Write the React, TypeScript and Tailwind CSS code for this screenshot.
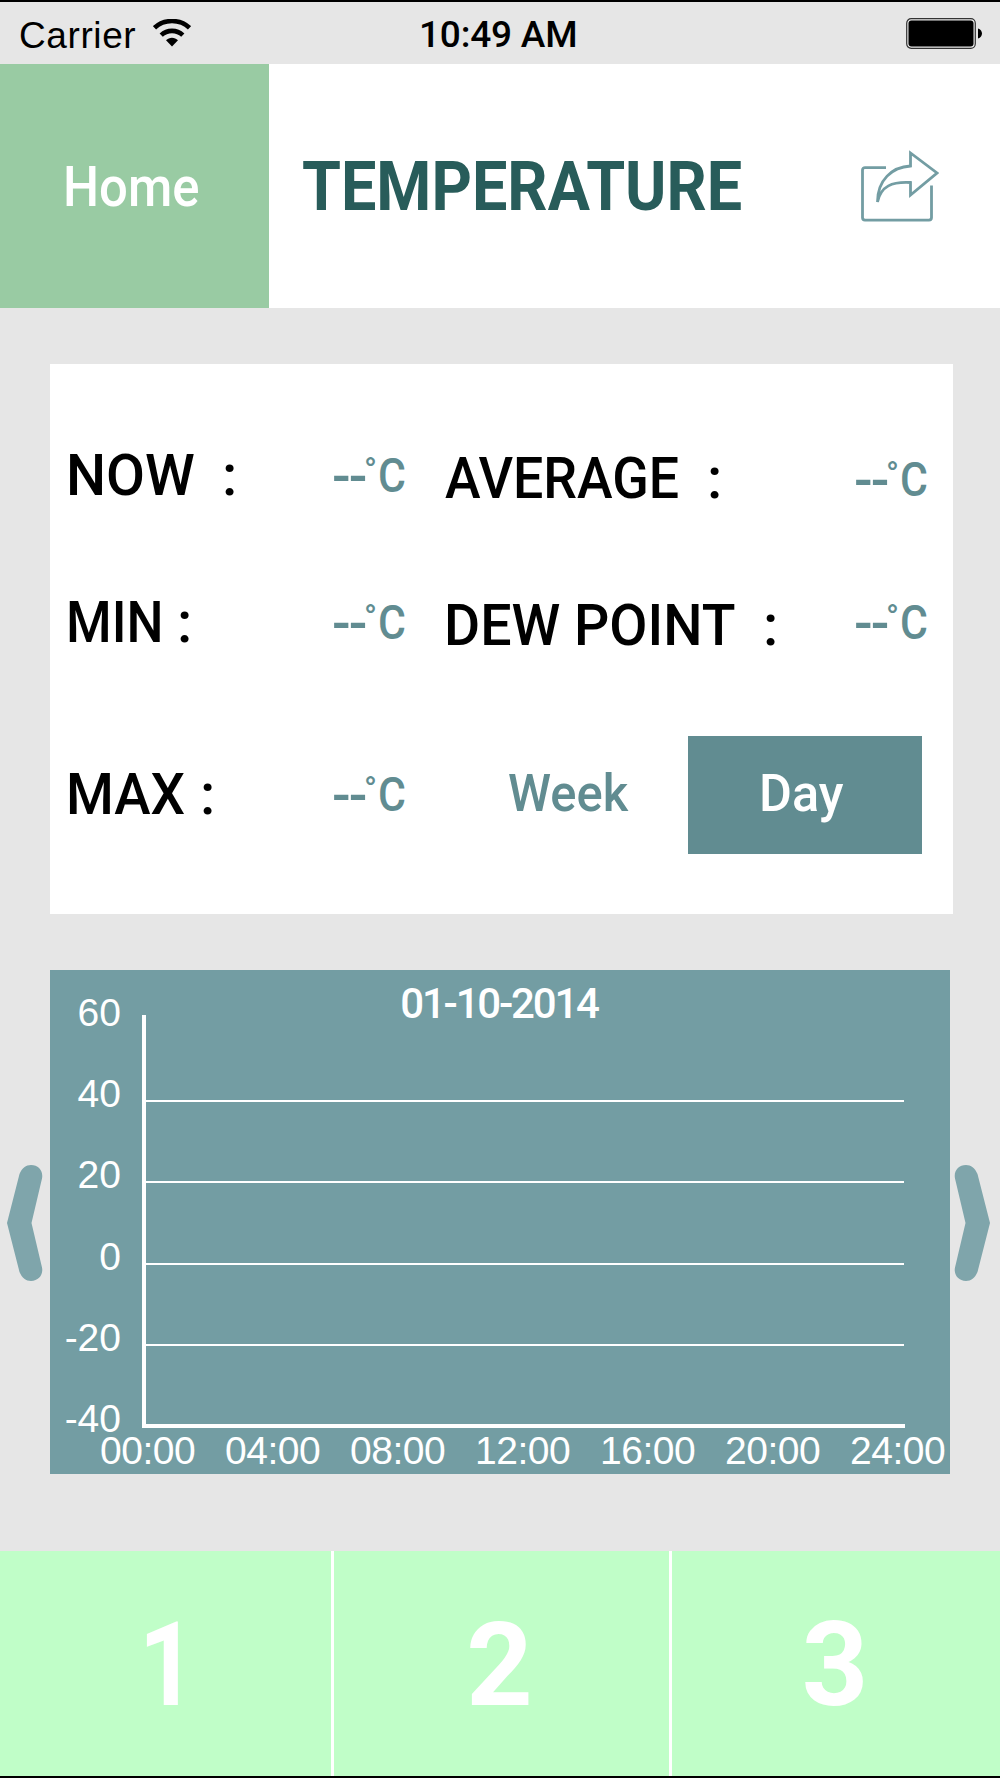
import { clsx } from 'clsx';

const Y_LABELS = ['60', '40', '20', '0', '-20', '-40'];
const X_LABELS = ['00:00', '04:00', '08:00', '12:00', '16:00', '20:00', '24:00'];

function StatusBar() {
  return (
    <div className="flex h-16 items-center border-t-2 border-black bg-[#e6e6e6] font-['Liberation_Sans',sans-serif] text-[37px] leading-none text-black">
      <div className="flex w-[419px] items-center pl-[19px] pt-[4px]">
        <span className="w-[134px] tracking-[0.6px]">Carrier</span>
        <svg className="mb-1 h-[28px] w-[38px]" viewBox="0 0 38 28" fill="none" stroke="#000" strokeWidth="4.6">
          <path d="M1.5 8.8C11-.2 27-.2 36.5 8.8" />
          <path d="M8.2 16.2c6-5.8 15.600-5.800 21.600 0" />
          <path d="M13 21.300c3.400-3.400 8.600-3.400 12 0L19 27.500Z" fill="#000" stroke="none" />
        </svg>
      </div>
      <span className="w-[487px] whitespace-nowrap pt-[3px] font-['Roboto',sans-serif] font-medium tracking-[-0.2px]">10:49 AM</span>
      <svg className="h-[31px] w-[77px]" viewBox="0 0 77 31">
        <rect x="0.700" y="0.700" width="68.600" height="29.600" rx="4.500" fill="#e6e6e6" stroke="#333" strokeWidth="1.200" />
        <rect x="2.500" y="2.500" width="65" height="26" rx="3" />
        <path d="M72 10.500c5.300 1.500 5.300 8.500 0 10Z" />
      </svg>
    </div>
  );
}

function Header() {
  return (
    <header className="flex h-[244px] bg-white">
      <button className="flex w-[269px] items-center bg-[#99cba3] pl-[63px] pt-[2px] text-left text-[55px] font-medium leading-none text-white">
        <span className="origin-left scale-x-[0.925]">Home</span>
      </button>
      <h1 className="flex w-[592px] items-center pl-[33px] pt-[2px] text-[68px] font-bold leading-none text-[#285c5a]">
        <span className="origin-left scale-x-[0.925]">TEMPERATURE</span>
      </h1>
      <svg className="mt-[86px] h-[72px] w-[78px]" viewBox="0 0 78 72" fill="none" stroke="#739da3" strokeWidth="2.800">
        <path d="M25 17.600H4a2.500 2.500 0 0 0-2.500 2.500v47.500A2.500 2.500 0 0 0 4 70.100h64a2.500 2.500 0 0 0 2.500-2.500V35.500" />
        <path d="M49.500 7v9C31 17 16.500 30 16.500 52 20 36 31 31.500 49.500 32.500V45L76 23 49.500 3v5" />
      </svg>
    </header>
  );
}

function Reading({ className }: { className?: string }) {
  return (
    <div className={clsx('flex h-[48px] items-start whitespace-nowrap text-[48px] leading-none text-[#618c91]', className)}>
      <span className="w-[34px] text-[56px] font-medium leading-[48px]">
        <span className="inline-block origin-left scale-x-[0.98] tracking-[-2px]">--</span>
      </span>
      <span className="-ml-[2px] w-[14px] text-[34px] font-medium">°</span>
      <span className="origin-left scale-x-[0.89] font-medium">C</span>
    </div>
  );
}

function Label({ word, width, scale, className }: { word: string; width: string; scale: string; className?: string }) {
  return (
    <div className={clsx('flex whitespace-nowrap text-[58px] font-medium leading-none text-black', className)}>
      <span className={width}>
        <span className={clsx('inline-block origin-left', scale)}>{word}</span>
      </span>
      <span>:</span>
    </div>
  );
}

function StatsCard() {
  return (
    <section className="ml-[50px] mt-[56px] h-[550px] w-[903px] bg-white">
      <div className="flex h-[223px] items-center">
        <Label className="-mt-[2px] w-[282px] pl-[16px]" word="NOW" width="w-[156px]" scale="scale-x-[0.975]" />
        <Reading className="mt-px w-[112px]" />
        <Label className="w-[410px] pl-px pt-[5px]" word="AVERAGE" width="w-[262px]" scale="scale-x-[0.925]" />
        <Reading className="mt-[9px]" />
      </div>
      <div className="flex h-[71px] items-center">
        <Label className="-mt-[2px] w-[282px] pl-[16px]" word="MIN" width="w-[111px]" scale="scale-x-[0.9]" />
        <Reading className="w-[112px]" />
        <Label className="w-[410px] pt-[5px]" word="DEW POINT" width="w-[319px]" scale="scale-x-[0.955]" />
        <Reading />
      </div>
      <div className="flex h-[256px] items-center pt-[17px]">
        <Label className="-mt-[2px] w-[282px] pl-[16px]" word="MAX" width="w-[134px]" scale="scale-x-[0.943]" />
        <Reading className="w-[176px]" />
        <button className="w-[180px] pb-[2px] text-left text-[52px] font-medium leading-none text-[#618c91]">
          <span className="inline-block origin-left scale-x-[0.94]">Week</span>
        </button>
        <button className="flex h-[118px] w-[234px] items-center bg-[#618c91] pb-[2px] pl-[71px] text-[52px] font-medium leading-none text-white">
          <span className="origin-left scale-x-[0.97]">Day</span>
        </button>
      </div>
    </section>
  );
}

function Arrow({ flip }: { flip?: boolean }) {
  return (
    <svg className={clsx('h-[116px] w-[36px]', flip && '-scale-x-100')} viewBox="0 0 36 116" fill="#7fa5ab">
      <path d="M0 58 12.500 9C15 3 19 0 24 0c7.500 0 12.500 6 11 13.500L24.500 58 35 102.500c1.500 7.500-3.500 13.500-11 13.500-5 0-9-3-11.500-9Z" />
    </svg>
  );
}

function Chart() {
  return (
    <div className="mt-[56px] flex h-[504px]">
      <button className="flex w-[50px] pl-[7px] pt-[195px]">
        <Arrow />
      </button>
      <section className="h-[504px] w-[900px] bg-[#739da3] text-white">
        <div className="flex h-[45px] items-end justify-center text-[42px] font-medium leading-none">
          <h2 className="mb-[-10px] mr-[2px] tracking-[-2.2px]">01-10-2014</h2>
        </div>
        <div className="flex h-[413px] font-['Liberation_Sans',sans-serif] text-[39px] leading-none">
          <div className="-mt-[22px] w-[92px] pr-[21px] text-right">
            {Y_LABELS.map((label) => (
              <div key={label} className="h-[81.2px]">{label}</div>
            ))}
          </div>
          <div className="w-[763px] border-b-4 border-l-4 border-white pt-[6px]">
            {[40, 20, 0, -20].map((value) => (
              <div key={value} className="mr-px h-[81.2px] border-b-2 border-white" />
            ))}
          </div>
        </div>
        <div className="flex pl-[36px] pt-[3px] font-['Liberation_Sans',sans-serif] text-[39px] leading-none">
          {X_LABELS.map((label) => (
            <div key={label} className="w-[125px] shrink-0 pl-[14px] tracking-[-0.5px]">{label}</div>
          ))}
        </div>
      </section>
      <button className="flex w-[50px] pl-[4px] pt-[195px]">
        <Arrow flip />
      </button>
    </div>
  );
}

function BottomTabs() {
  return (
    <nav className="mt-[77px] flex h-[227px] border-b-2 border-black bg-[#c0fec8] text-[116px] font-bold leading-none text-white">
      <button className="h-full w-[334px] border-r-[3px] border-white pl-[3px] pt-[2px]">
        <span className="inline-block scale-x-[0.86]">1</span>
      </button>
      <button className="h-full w-[338px] border-r-[3px] border-white pr-[4px] pt-[2px]">2</button>
      <button className="h-full w-[328px] pr-[2px] pt-[2px]">3</button>
    </nav>
  );
}

export default function App() {
  return (
    <main className="h-[1778px] w-[1000px] overflow-hidden bg-[#e6e6e6] font-['Roboto',sans-serif]">
      <StatusBar />
      <Header />
      <StatsCard />
      <Chart />
      <BottomTabs />
    </main>
  );
}
